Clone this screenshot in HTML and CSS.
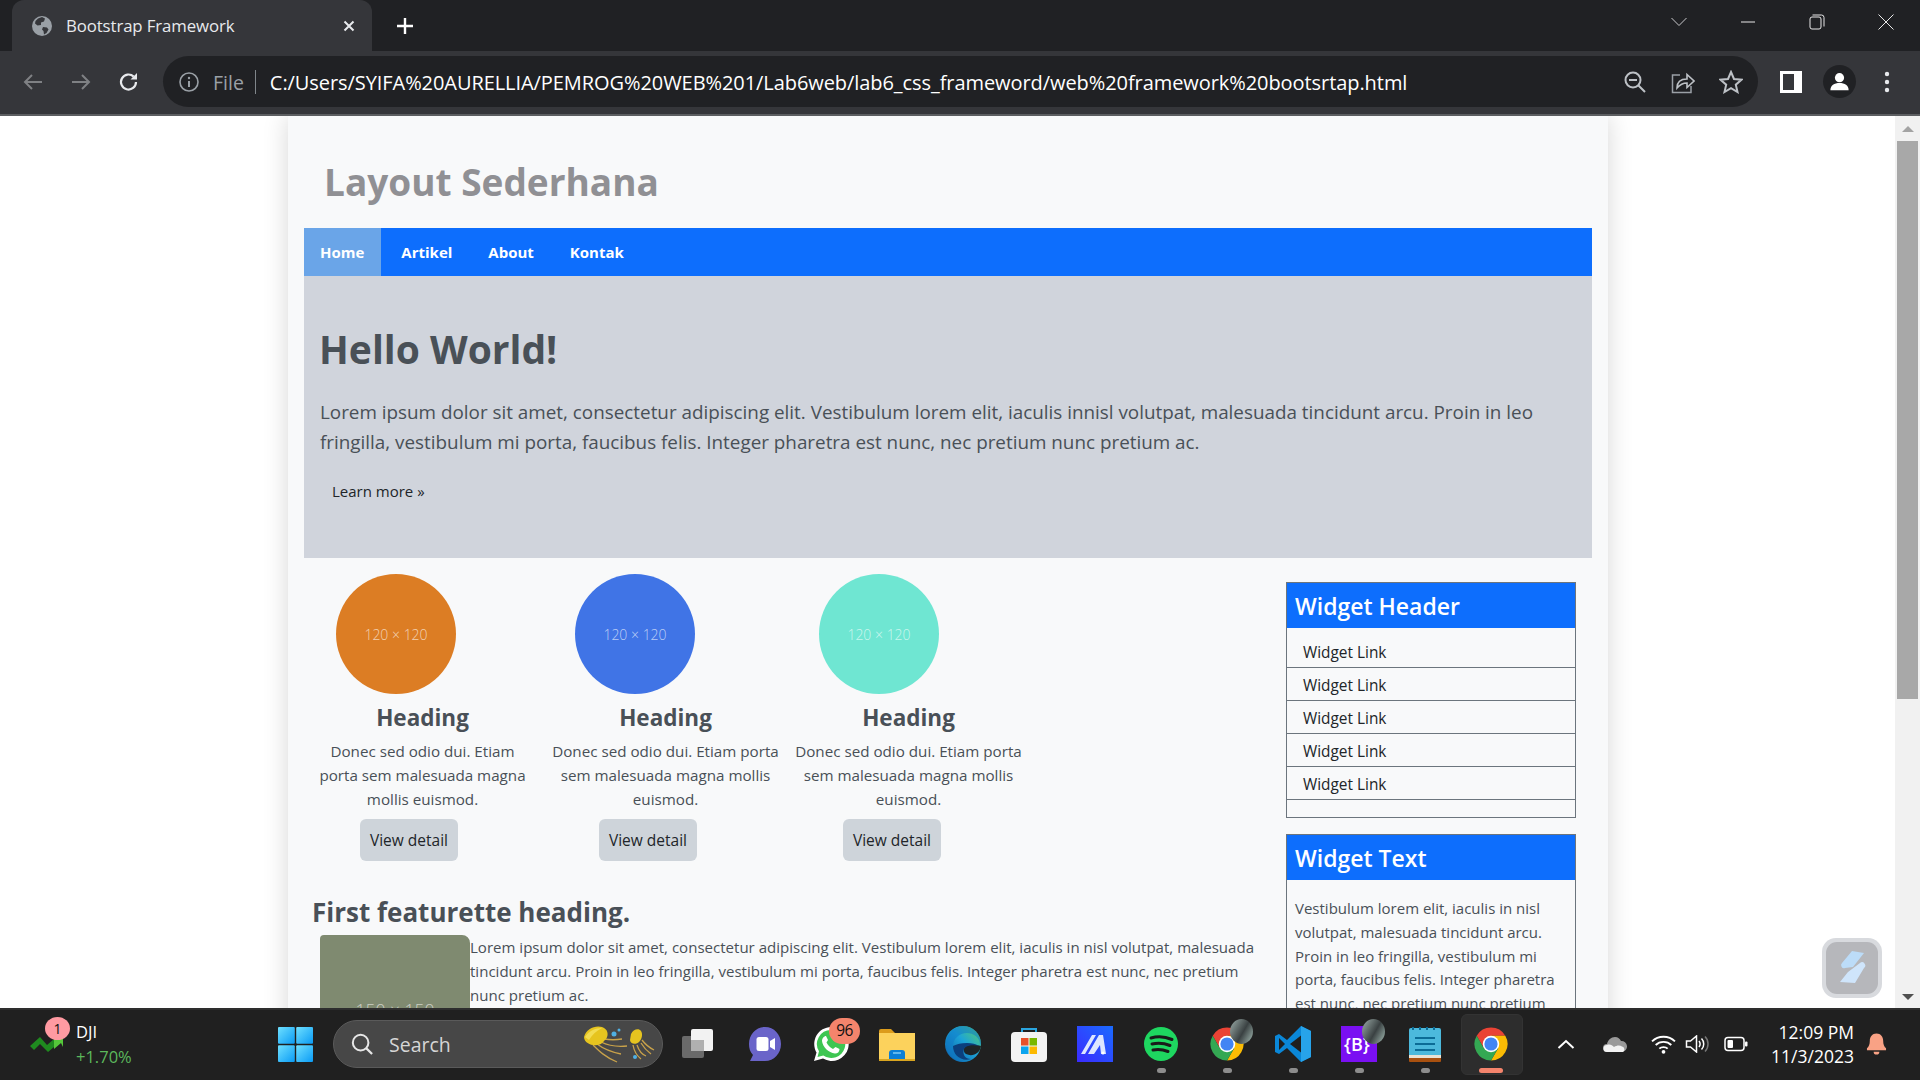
FILE: index.html
```html
<!DOCTYPE html>
<html lang="id">
<head>
<meta charset="utf-8">
<title>Bootstrap Framework</title>
<link rel="stylesheet" href="styles.css">
</head>
<body>
<svg class="defs" width="0" height="0">
  <symbol id="chrome" viewBox="0 0 24 24">
    <path fill="#ea4335" d="M2.47 6.5A11 11 0 0 1 21.53 6.5H12L7.24 14.75Z"/>
    <path fill="#fbbc04" d="M21.53 6.5A11 11 0 0 1 12 23L16.76 14.75 12 6.5Z"/>
    <path fill="#34a853" d="M12 23A11 11 0 0 1 2.47 6.5L7.24 14.75H16.76Z"/>
    <circle cx="12" cy="12" r="5.5" fill="#fff"/><circle cx="12" cy="12" r="4.4" fill="#4285f4"/>
  </symbol>
  <linearGradient id="winblue" x1="0" y1="0" x2="1" y2="1"><stop offset="0" stop-color="#6fe0ff"/><stop offset="1" stop-color="#0a9bf5"/></linearGradient>
  <linearGradient id="edgeg" x1="1" y1="0" x2="0" y2="1"><stop offset="0" stop-color="#5fd35f"/><stop offset=".45" stop-color="#1ca3d8"/><stop offset="1" stop-color="#0c59a4"/></linearGradient>
  <linearGradient id="magen" x1="0" y1="1" x2="1" y2="0"><stop offset="0" stop-color="#3b2bff"/><stop offset="1" stop-color="#1a6bff"/></linearGradient>
</svg>

<header class="tabstrip">
  <div class="tab">
    <svg class="favicon" viewBox="0 0 20 20"><circle cx="10" cy="10" r="10" fill="#9aa0a6"/><path fill="#35363a" d="M6 2.5 10 1l3 1.5-1 3-3 1v2.500L5.500 9.500 3 7.500 3.500 5ZM11 11l4 .5 1.500 2-2 3.500-2.500 1.500-.5-3.500-1.500-1.500Z"/></svg>
    <span class="tab-title">Bootstrap Framework</span>
    <svg class="tab-close" viewBox="0 0 12 12"><path d="M1.500 1.500l9 9M10.500 1.500l-9 9" stroke="#e8eaed" stroke-width="2" fill="none"/></svg>
  </div>
  <svg class="newtab" viewBox="0 0 18 18"><path d="M9 1v16M1 9h16" stroke="#fff" stroke-width="2.400" fill="none"/></svg>
  <div class="winctl">
    <svg class="winbtn" viewBox="0 0 16 10"><path d="M.5 1l7.500 7.500L15.500 1" stroke="#c8c9cb" fill="none"/></svg>
    <svg class="winbtn" viewBox="0 0 16 10"><path d="M1 5h14" stroke="#e8e8e8" fill="none"/></svg>
    <svg class="winbtn" viewBox="0 0 16 16"><path d="M3 1.500h9a2.500 2.500 0 0 1 2.500 2.500v9" stroke="#e8e8e8" fill="none" transform="translate(.5 -.5)"/><rect x="1" y="3" width="11" height="12" rx="2" stroke="#e8e8e8" fill="none"/></svg>
    <svg class="winbtn" viewBox="0 0 16 16"><path d="M.5.5l15 15M15.500.5l-15 15" stroke="#e8e8e8" fill="none"/></svg>
  </div>
</header>

<nav class="toolbar">
  <svg class="tool" viewBox="0 0 24 24"><path d="M21 12H4M11 5l-7 7 7 7" stroke="#7f8184" stroke-width="2" fill="none"/></svg>
  <svg class="tool" viewBox="0 0 24 24"><path d="M3 12h17M13 5l7 7-7 7" stroke="#7f8184" stroke-width="2" fill="none"/></svg>
  <svg class="tool" viewBox="0 0 24 24"><path d="M19 12a7.500 7.500 0 1 1-2.300-5.400" stroke="#e8eaed" stroke-width="2.200" fill="none"/><path d="M20 3v6.500h-6.500Z" fill="#e8eaed"/></svg>
  <div class="omnibox">
    <svg class="info" viewBox="0 0 20 20"><circle cx="10" cy="10" r="9" stroke="#9aa0a6" stroke-width="1.600" fill="none"/><path d="M10 9v6" stroke="#9aa0a6" stroke-width="2"/><circle cx="10" cy="6" r="1.200" fill="#9aa0a6"/></svg>
    <span class="scheme">File</span>
    <span class="omni-sep"></span>
    <span class="url">C:/Users/SYIFA%20AURELLIA/PEMROG%20WEB%201/Lab6web/lab6_css_frameword/web%20framework%20bootsrtap.html</span>
    <div class="omni-icons">
      <svg class="omni-ic" viewBox="0 0 24 24"><circle cx="10" cy="10" r="7.500" stroke="#bdc1c6" stroke-width="2" fill="none"/><path d="M6 10h8M15.500 15.500L22 22" stroke="#bdc1c6" stroke-width="2" fill="none"/></svg>
      <svg class="omni-ic" viewBox="0 0 24 24"><path d="M9 5H1.500v17.500H20V16" stroke="#9aa0a6" stroke-width="1.500" fill="none"/><path d="M6 18c0-6 4-9 10-9V4.500L23 11l-7 6.500V13c-4 0-7 1.500-10 5Z" stroke="#bdc1c6" stroke-width="1.600" fill="none"/></svg>
      <svg class="omni-ic" viewBox="0 0 24 24"><path d="M12 2l3 7 7.500.7-5.700 5 1.700 7.300L12 18.200 5.500 22l1.700-7.300-5.700-5L9 9Z" stroke="#bdc1c6" stroke-width="2" fill="none"/></svg>
    </div>
  </div>
  <div class="tool-end">
    <svg class="sidepanel" viewBox="0 0 22 22"><rect width="22" height="22" fill="#fff"/><rect x="3" y="3" width="11" height="16" fill="#35363a"/></svg>
    <div class="avatar"><svg viewBox="0 0 24 24"><circle cx="12" cy="8" r="4.800" fill="#fff"/><path d="M2.500 21c0-5 4-7.500 9.500-7.500s9.500 2.500 9.500 7.500Z" fill="#fff"/></svg></div>
    <svg class="kebab" viewBox="0 0 6 22"><circle cx="3" cy="3" r="2.200" fill="#e8eaed"/><circle cx="3" cy="11" r="2.200" fill="#e8eaed"/><circle cx="3" cy="19" r="2.200" fill="#e8eaed"/></svg>
  </div>
</nav>

<div class="viewport">
  <main class="page">
    <div class="container">
      <div class="site-head"><h1 class="site-title">Layout Sederhana</h1></div>
      <ul class="menu">
        <li class="menu-item is-active">Home</li>
        <li class="menu-item">Artikel</li>
        <li class="menu-item">About</li>
        <li class="menu-item">Kontak</li>
      </ul>
      <section class="hero">
        <h2 class="hero-title">Hello World!</h2>
        <p class="hero-lead">Lorem ipsum dolor sit amet, consectetur adipiscing elit. Vestibulum lorem elit, iaculis innisl volutpat, malesuada tincidunt arcu. Proin in leo<br>fringilla, vestibulum mi porta, faucibus felis. Integer pharetra est nunc, nec pretium nunc pretium ac.</p>
        <span class="hero-link">Learn more »</span>
      </section>
      <div class="content">
        <div class="primary">
          <div class="cols">
            <article class="col col-a">
              <div class="circle circle-orange">120 × 120</div>
              <h3 class="col-title">Heading</h3>
              <p class="col-text">Donec sed odio dui. Etiam<br>porta sem malesuada magna<br>mollis euismod.</p>
              <span class="btn">View detail</span>
            </article>
            <article class="col col-b">
              <div class="circle circle-blue">120 × 120</div>
              <h3 class="col-title">Heading</h3>
              <p class="col-text">Donec sed odio dui. Etiam porta<br>sem malesuada magna mollis<br>euismod.</p>
              <span class="btn">View detail</span>
            </article>
            <article class="col col-c">
              <div class="circle circle-teal">120 × 120</div>
              <h3 class="col-title">Heading</h3>
              <p class="col-text">Donec sed odio dui. Etiam porta<br>sem malesuada magna mollis<br>euismod.</p>
              <span class="btn">View detail</span>
            </article>
          </div>
          <h2 class="feat-title">First featurette heading.</h2>
          <div class="feat">
            <div class="feat-img">150 × 150</div>
            <p class="feat-text">Lorem ipsum dolor sit amet, consectetur adipiscing elit. Vestibulum lorem elit, iaculis in nisl volutpat, malesuada<br>tincidunt arcu. Proin in leo fringilla, vestibulum mi porta, faucibus felis. Integer pharetra est nunc, nec pretium<br>nunc pretium ac.</p>
          </div>
        </div>
        <aside class="sidebar">
          <div class="widget">
            <h3 class="widget-head">Widget Header</h3>
            <ul class="widget-list">
              <li class="widget-link">Widget Link</li>
              <li class="widget-link">Widget Link</li>
              <li class="widget-link">Widget Link</li>
              <li class="widget-link">Widget Link</li>
              <li class="widget-link">Widget Link</li>
            </ul>
          </div>
          <div class="widget">
            <h3 class="widget-head">Widget Text</h3>
            <p class="widget-text">Vestibulum lorem elit, iaculis in nisl<br>volutpat, malesuada tincidunt arcu.<br>Proin in leo fringilla, vestibulum mi<br>porta, faucibus felis. Integer pharetra<br>est nunc, nec pretium nunc pretium</p>
          </div>
        </aside>
      </div>
    </div>
    <div class="float-btn"><svg viewBox="0 0 60 60"><rect x="4" y="4" width="52" height="52" rx="11" fill="#b6b7bb"/><path d="M30 13l12 2-11 14-8 1a3 3 0 0 1-3-5Z" fill="#bcdcf8"/><path d="M38 25a3 3 0 0 1 4 5L33 45l-15-1 8-10Z" fill="#cfe5fb"/></svg></div>
  </main>
  <div class="scrollbar">
    <span class="sb-up"></span>
    <div class="sb-thumb"></div>
    <span class="sb-down"></span>
  </div>
</div>

<footer class="taskbar">
  <div class="tb-widget">
    <div class="stock-ic">
      <svg viewBox="0 0 34 18"><path d="M0 11L10 2l7 8 7-6v8l-6 5-8-8-6 6Z" fill="#1f8a1f"/><path d="M24 4l9-2v10l-2-4-7 6Z" fill="#55c83a"/></svg>
      <span class="stock-badge">1</span>
    </div>
    <div class="stock-text"><span class="stock-name">DJI</span><span class="stock-val">+1.70%</span></div>
  </div>
  <svg class="tb-start" viewBox="0 0 35 35"><rect width="16.800" height="16.800" rx="1" fill="url(#winblue)"/><rect x="18.200" width="16.800" height="16.800" rx="1" fill="url(#winblue)"/><rect y="18.200" width="16.800" height="16.800" rx="1" fill="url(#winblue)"/><rect x="18.200" y="18.200" width="16.800" height="16.800" rx="1" fill="url(#winblue)"/></svg>
  <div class="tb-search">
    <svg class="tb-search-ic" viewBox="0 0 24 24"><circle cx="10.500" cy="10.500" r="8.500" stroke="#e6e6e6" stroke-width="2.200" fill="none"/><path d="M16.500 16.500L23 23" stroke="#e6e6e6" stroke-width="2.400"/></svg>
    <span class="tb-search-text">Search</span>
    <svg class="tb-jelly" viewBox="0 0 72 38"><g stroke="#c9a24a" stroke-width="1.300" fill="none"><path d="M10 20c6 6 12 12 24 17M14 19c8 6 14 8 24 10M18 17c8 4 16 5 26 4M21 14c6 1 12 1 18 0"/><path d="M50 20c1 6 3 10 8 14M54 20c2 6 4 9 9 11M58 18c3 5 6 8 10 11M59 15c3 4 6 7 12 10"/></g><path d="M1 12C3 4 12 0 19 2c6 2 7 8 4 12-3 3-5 6-9 6-5 1-13-2-13-8Z" fill="#e6c41f"/><path d="M2 12c4-6 10-9 17-9-6 3-10 7-13 12Z" fill="#f2dc52"/><path d="M48 9c2-5 8-6 10-3 2 3 1 8-2 11-3 3-9 2-9-2Z" fill="#e6c41f"/><circle cx="31" cy="9" r="2.500" fill="#4fb0e4"/><circle cx="36" cy="5" r="1.500" fill="#4fb0e4"/><circle cx="52" cy="32" r="2" fill="#4fb0e4"/></svg>
  </div>
  <div class="tb-apps">
    <div class="tb-app"><svg class="tb-ic" viewBox="0 0 36 36"><rect x="1" y="10" width="22" height="22" rx="2" fill="#6a6a6a"/><rect x="10" y="3" width="22" height="22" rx="2" fill="#f2f2f2"/><rect x="10" y="14" width="13" height="11" fill="#b0b0b0"/></svg></div>
    <div class="tb-app"><svg class="tb-ic" viewBox="0 0 36 36"><path d="M18 1c9 0 16 7.500 16 17s-7 17-16 17H3l3-6C3 26 2 22 2 18 2 8.500 9 1 18 1Z" fill="#6a64c9"/><rect x="9.500" y="11" width="12" height="14" rx="2.500" fill="#fff"/><path d="M23 15l5-3v12l-5-3Z" fill="#fff"/></svg></div>
    <div class="tb-app">
      <svg class="tb-ic" viewBox="0 0 36 36"><path d="M18 1a17 17 0 0 0-14.500 25.500L1 35l9-2.400A17 17 0 1 0 18 1Z" fill="#fff"/><path d="M18 4a14 14 0 0 0-12 21.300L4.500 31l5.800-1.500A14 14 0 1 0 18 4Z" fill="#3ec652"/><path d="M13 10l2 4-1.500 2.500c1.500 3 3.500 5 6.500 6.500l2.500-2 4 2c0 3-2 4.500-4.500 4.500-6.500-.5-12.500-7-13-12.500C9 12.500 11 10 13 10Z" fill="#fff"/></svg>
      <span class="tb-badge">96</span>
    </div>
    <div class="tb-app"><svg class="tb-ic" viewBox="0 0 36 36"><path d="M0 5a2 2 0 0 1 2-2h10l4 4h-16Z" fill="#dc9c1c"/><path d="M0 7h36v27H0Z" fill="#fcd25c"/><path d="M0 33h36v2H0Z" fill="#d9a520"/><path d="M10 32V27a3 3 0 0 1 3-3h10a3 3 0 0 1 3 3v6H10Z" fill="#0b7fd6"/><path d="M14 27h8" stroke="#7ccaf5" stroke-width="1.500"/></svg></div>
    <div class="tb-app"><svg class="tb-ic" viewBox="0 0 36 36"><circle cx="18" cy="18" r="18" fill="url(#edgeg)"/><path d="M36 20c-1 8-9 11-15 8-3-2-3-6 0-8 4-3 11-1 15 0Z" fill="#1f1f1f" opacity=".95"/><path d="M35 19c0-8-7-12-13-12-8 0-14 6-14 13 0 8 6 15 14 16-12 0-21-7-21-18C1 8 9 0 18 0c10 0 18 8 18 18Z" fill="#0f7ac9" opacity=".55"/><path d="M8 20c0 9 8 16 18 13-6 0-9-5-7-10 1-3 8-5 15-3-3-2-7-3-12-3-6 0-10 1-14 3Z" fill="#0b3f7d"/></svg></div>
    <div class="tb-app"><svg class="tb-ic" viewBox="0 0 36 36"><path d="M11 8V3h14v5" stroke="#2aa5df" stroke-width="2" fill="none"/><rect y="6" width="36" height="30" rx="4" fill="#f3f3f3"/><rect x="10" y="12" width="7.500" height="7.500" fill="#e8502a"/><rect x="18.500" y="12" width="7.500" height="7.500" fill="#7ab800"/><rect x="10" y="20.500" width="7.500" height="7.500" fill="#0ca4ee"/><rect x="18.500" y="20.500" width="7.500" height="7.500" fill="#fcb900"/></svg></div>
    <div class="tb-app"><svg class="tb-ic" viewBox="0 0 36 36"><rect width="36" height="36" fill="url(#magen)"/><path d="M4 28L15 9h4L8 28ZM11 28L22 9h4l3 19h-5l-1-9-6 9Z" fill="#dde6ff"/><circle cx="26" cy="27" r="1.500" fill="#fff"/></svg></div>
    <div class="tb-app"><svg class="tb-ic" viewBox="0 0 36 36"><circle cx="18" cy="18" r="17" fill="#1ed760"/><path d="M8 12c7-2 14-1.500 21 1.500M9 18c6-1.500 12-1 18 1.500M10 24c5-1 10-.5 15 1.500" stroke="#1a1a1a" stroke-width="3" stroke-linecap="round" fill="none"/></svg><span class="tb-dot"></span></div>
    <div class="tb-app"><svg class="tb-ic" viewBox="0 0 24 24"><use href="#chrome"/></svg><span class="tb-over"></span><span class="tb-dot"></span></div>
    <div class="tb-app"><svg class="tb-ic" viewBox="0 0 36 36"><path d="M26 0l10 5v26l-10 5-14-14-8 6-4-2V10l4-2 8 6Z" fill="#0a87d8"/><path d="M26 0l10 5v26l-10 5Z" fill="#27a3ea"/><path d="M26 9.500L15 18l11 8.500Z" fill="#1f1f1f"/><path d="M4 12v12l6-6Z" fill="#1f1f1f"/></svg><span class="tb-dot"></span></div>
    <div class="tb-app"><svg class="tb-ic" viewBox="0 0 36 36"><rect width="36" height="36" fill="#7a10f2"/><text class="bs-mark" x="3" y="25">{B}</text></svg><span class="tb-over"></span><span class="tb-dot"></span></div>
    <div class="tb-app"><svg class="tb-ic" viewBox="0 0 36 36"><rect x="2" y="2" width="32" height="30" rx="2" fill="#4cb9dc"/><rect x="2" y="30" width="32" height="6" rx="1" fill="#a8500f"/><rect x="2" y="29" width="32" height="3" fill="#e9e2d4"/><path d="M8 12h20M8 18h20M8 24h20" stroke="#0b6c96" stroke-width="2"/><path d="M6 4v-3M13 4v-3M20 4v-3M27 4v-3" stroke="#0b6c96" stroke-width="2"/></svg><span class="tb-dot"></span></div>
    <div class="tb-app is-current"><svg class="tb-ic" viewBox="0 0 24 24"><use href="#chrome"/></svg><span class="tb-bar"></span></div>
  </div>
  <div class="tray">
    <svg class="tray-chev" viewBox="0 0 18 10"><path d="M1.500 9L9 2l7.500 7" stroke="#fff" stroke-width="2" fill="none"/></svg>
    <svg class="tray-cloud" viewBox="0 0 24 16"><path d="M4 16a4 4 0 0 1 0-8c1-4 4-7 8-7 3 0 5 2 6 4a5.500 5.500 0 0 1 1 11Z" fill="#9a9a9a"/><path d="M4 16a3.500 3.500 0 0 1 0-7c3-1 5 0 7 2 3-2 6-2 8-.500a3 3 0 0 1 1 5.500Z" fill="#f2f2f2"/></svg>
    <svg class="tray-wifi" viewBox="0 0 24 18"><path d="M1 6c6-6 16-6 22 0M4.500 9.500c4-4 11-4 15 0M8 13c2-2 6-2 8 0" stroke="#fff" stroke-width="1.800" fill="none"/><circle cx="12" cy="16" r="1.800" fill="#fff"/></svg>
    <svg class="tray-vol" viewBox="0 0 24 18"><path d="M1.500 6v6h4l6 5V1l-6 5Z" stroke="#fff" stroke-width="1.500" fill="none"/><path d="M14 6c1.500 2 1.500 4 0 6M16.500 3.500c3 3 3 8 0 11" stroke="#fff" stroke-width="1.500" fill="none"/><path d="M20 1.500c4 4 4 11 0 15" stroke="#777" stroke-width="1.500" fill="none"/></svg>
    <svg class="tray-batt" viewBox="0 0 24 16"><rect x="1" y="1.500" width="19" height="13" rx="3" stroke="#fff" stroke-width="1.500" fill="none"/><rect x="3.500" y="4" width="5.500" height="8" rx="1" fill="#fff"/><rect x="21" y="5.500" width="2.500" height="5" rx="1" fill="#fff"/></svg>
    <div class="clock"><span>12:09 PM</span><span>11/3/2023</span></div>
    <svg class="tray-bell" viewBox="0 0 22 24"><path d="M11 1c4.500 0 7 3.500 7 7.500 0 4 1 6 3 8v2H1v-2c2-2 3-4 3-8C4 4.500 6.500 1 11 1Z" fill="#f9a285"/><path d="M8 20h6a3 3 0 0 1-6 0Z" fill="#f9a285"/></svg>
  </div>
</footer>
</body>
</html>
```
FILE: styles.css
```css
* { box-sizing: border-box; }
html, body { margin: 0; padding: 0; height: 100%; overflow: hidden; }
body { display: flex; flex-direction: column; height: 1080px; font-family: "Open Sans", "Noto Sans", sans-serif; }
.defs { position: absolute; }
ul { list-style: none; margin: 0; padding: 0; }
h1, h2, h3, p { margin: 0; }

/* Browser chrome */
.tabstrip { height: 51px; background: #202124; display: flex; align-items: stretch; padding-left: 12px; flex: none; }
.tab { width: 360px; height: 51px; background: #35363a; border-radius: 12px 12px 0 0; display: flex; align-items: center; padding: 0 0 0 20px; }
.favicon { width: 20px; height: 20px; flex: none; }
.tab-title { font-size: 16.800px; color: #e8eaed; margin-left: 14px; flex: 1; white-space: nowrap; letter-spacing: -.1px; }
.tab-close { width: 12px; height: 12px; margin-right: 17px; }
.newtab { width: 18px; height: 18px; align-self: center; margin-left: 24px; }
.winctl { margin-left: auto; display: flex; align-items: center; height: 43px; padding-right: 26px; gap: 53px; }
.winbtn { width: 16px; height: 16px; }
.toolbar { height: 65px; background: #35363a; border-bottom: 2px solid #5c5e61; display: flex; align-items: center; padding: 0 0 2px 21px; flex: none; }
.tool { width: 24px; height: 24px; margin-right: 24px; flex: none; }
.tool:nth-child(3) { margin-right: 22px; }
.omnibox { width: 1595px; height: 51px; border-radius: 26px; background: #202124; display: flex; align-items: center; padding: 0 15px 0 16px; flex: none; }
.info { width: 20px; height: 20px; flex: none; }
.scheme { font-size: 19.500px; color: #9aa0a6; margin: 2px 0 0 14px; }
.omni-sep { width: 1px; height: 24px; background: #80868b; margin: 0 14px 0 11px; }
.url { font-size: 20px; color: #fff; white-space: nowrap; letter-spacing: -.07px; margin-top: 2px; }
.omni-icons { margin-left: auto; display: flex; align-items: center; gap: 24px; }
.omni-ic { width: 24px; height: 24px; }
.tool-end { display: flex; align-items: center; margin-left: 22px; }
.sidepanel { width: 22px; height: 22px; }
.avatar { width: 33px; height: 33px; border-radius: 50%; background: #202124; margin-left: 21px; padding: 5px; display: flex; }
.kebab { width: 6px; height: 22px; margin-left: 28px; }

/* Page viewport */
.viewport { height: 892px; display: flex; flex: none; overflow: hidden; }
.page { flex: 1; background: #fff; position: relative; overflow: hidden; padding-left: 288px; }
.container { width: 1320px; background: #f8f9fa; box-shadow: 0 0 24px rgba(0, 0, 0, .16); padding: 0 16px; height: 1400px; color: #495057; }
.site-head { padding: 42px 0 22px 20px; }
.site-title { font-size: 37px; line-height: 48px; font-weight: 700; color: #909094; white-space: nowrap; }
.menu { display: flex; gap: 4px; height: 48px; background: #0d6efd; }
.menu-item { color: #fff; font-size: 15px; font-weight: 700; line-height: 48px; padding: 0 16px; }
.menu-item.is-active { background: #6aa5e8; padding-right: 17px; }
.hero { height: 282px; background: #d0d4dc; padding: 49px 16px 0; }
.hero-title { font-size: 39px; line-height: 48px; font-weight: 700; color: #495057; margin-left: -1px; }
.hero-lead { font-size: 18.850px; line-height: 30px; margin-top: 24px; white-space: nowrap; }
.hero-link { display: block; font-size: 15px; line-height: 24px; color: #212529; margin: 22px 0 0 12px; }
.content { display: flex; }
.primary { flex: 1; min-width: 0; padding-top: 16px; }
.cols { display: grid; grid-template-columns: repeat(3, 243px); margin-left: -3px; }
.col { display: flex; flex-direction: column; align-items: flex-start; }
.circle { width: 120px; height: 120px; border-radius: 50%; color: rgba(255, 255, 255, .65); font-size: 14px; font-weight: 300; display: flex; align-items: center; justify-content: center; }
.circle-orange { background: #dc7d24; }
.circle-blue { background: #4074e6; }
.circle-teal { background: #6fe6d2; }
.col-title { width: 100%; text-align: center; font-size: 22.500px; font-weight: 700; line-height: 32px; margin-top: 8px; }
.col-text { width: 100%; text-align: center; font-size: 15.200px; line-height: 24px; margin-top: 5px; white-space: nowrap; }
.btn { display: block; width: 98px; height: 42px; border-radius: 6px; background: #ced4da; color: #212529; font-size: 15.500px; font-weight: 500; line-height: 42px; text-align: center; margin-top: 8px; }
.col-a .circle { margin-left: 35px; }
.col-a .btn { margin-left: 59px; }
.col-b .circle { margin-left: 31px; }
.col-b .btn { margin-left: 55px; }
.col-c .circle { margin-left: 32px; }
.col-c .btn { margin-left: 56px; }
.feat-title { font-size: 26px; font-weight: 700; line-height: 34px; margin: 34px 0 6px 8px; white-space: nowrap; }
.feat { display: flex; padding-left: 16px; }
.feat-img { width: 150px; height: 150px; background: #7f8a70; border-radius: 4px 8px 0 0; color: rgba(255, 255, 255, .6); font-size: 17.500px; font-weight: 300; display: flex; align-items: center; justify-content: center; flex: none; }
.feat-text { font-size: 15.050px; line-height: 24px; white-space: nowrap; }
.sidebar { width: 290px; margin-right: 16px; padding-top: 24px; display: flex; flex-direction: column; gap: 16px; flex: none; }
.widget { border: 1px solid #6c757d; }
.widget-head { height: 45px; background: #0d6efd; color: #fff; font-size: 23px; font-weight: 600; line-height: 47px; padding-left: 8px; }
.widget-list { padding: 7px 0 17px; }
.widget-link { height: 33px; border-bottom: 1px solid #6c757d; padding-left: 16px; font-size: 15.400px; line-height: 36px; color: #212529; }
.widget-text { padding: 17px 8px; font-size: 15px; line-height: 23.750px; white-space: nowrap; }
.float-btn { position: absolute; left: 1822px; top: 822px; width: 60px; height: 60px; border-radius: 14px; background: #d8dade; display: flex; }

/* Scrollbar */
.scrollbar { width: 25px; background: #f1f1f1; position: relative; flex: none; }
.sb-thumb { position: absolute; top: 25px; left: 2px; width: 21px; height: 558px; background: #a8a8a8; }
.sb-up { position: absolute; top: 10px; left: 7px; border: 6px solid transparent; border-top: 0; border-bottom: 6px solid #a3a3a3; }
.sb-down { position: absolute; bottom: 8px; left: 7px; border: 6px solid transparent; border-bottom: 0; border-top: 6px solid #505050; }

/* Taskbar */
.taskbar { height: 72px; background: #202020; border-top: 2px solid #2e2e2e; display: flex; align-items: center; flex: none; color: #fff; padding-bottom: 2px; }
.tb-widget { width: 278px; display: flex; align-items: center; padding-left: 30px; flex: none; }
.stock-ic { width: 34px; height: 18px; position: relative; display: flex; }
.stock-badge { position: absolute; left: 15px; top: -18px; width: 25px; height: 23px; border-radius: 50%; background: #ff9aa2; color: #111; font-size: 14px; text-align: center; line-height: 23px; }
.stock-text { display: flex; flex-direction: column; margin-left: 12px; font-size: 16.500px; line-height: 25px; }
.stock-val { color: #5cb85c; }
.tb-start { width: 35px; height: 35px; flex: none; }
.tb-search { width: 330px; height: 48px; border-radius: 24px; background: #474747; border: 1px solid #5a5a5a; margin-left: 20px; display: flex; align-items: center; padding-left: 17px; flex: none; }
.tb-search-ic { width: 22px; height: 22px; }
.tb-search-text { font-size: 19.500px; color: #d6d6d6; margin-left: 16px; }
.tb-jelly { width: 72px; height: 38px; margin-left: auto; margin-right: 7px; }
.tb-apps { display: flex; margin-left: 3px; flex: none; }
.tb-app { width: 66px; height: 60px; display: flex; justify-content: center; align-items: center; position: relative; }
.tb-ic { width: 36px; height: 36px; }
.tb-badge { position: absolute; left: 31px; top: 4px; width: 31px; height: 26px; border-radius: 13px; background: #f4846c; color: #111; font-size: 15.500px; line-height: 25px; text-align: center; letter-spacing: -.5px; }
.tb-over { position: absolute; left: 36px; top: 5px; width: 23px; height: 25px; border-radius: 50%; background: linear-gradient(120deg, #9fb0ac, #3a4142 55%, #a8c0b8); }
.tb-dot { position: absolute; left: 29px; bottom: 1px; width: 9px; height: 5px; border-radius: 3px; background: #8d8d8d; }
.is-current::before { content: ""; position: absolute; left: 3px; top: 0; width: 60px; height: 59px; border-radius: 6px; background: #2d2d2d; border: 1px solid #333; }
.is-current .tb-ic { position: relative; }
.tb-bar { position: absolute; left: 21px; bottom: 1px; width: 24px; height: 5px; border-radius: 3px; background: #f4846c; }
.bs-mark { fill: #fff; font-family: "Open Sans", sans-serif; font-size: 18px; font-weight: 600; }
.tray { flex: 1; display: flex; align-items: center; min-width: 0; }
.tray-chev { width: 18px; height: 10px; margin-left: 33px; }
.tray-cloud { width: 24px; height: 16px; margin-left: 28px; }
.tray-wifi { width: 25px; height: 19px; margin-left: 24px; }
.tray-vol { width: 24px; height: 18px; margin-left: 9px; }
.tray-batt { width: 24px; height: 16px; margin-left: 15px; }
.clock { display: flex; flex-direction: column; align-items: flex-end; width: 96px; margin-left: 10px; font-size: 17.500px; line-height: 24px; }
.tray-bell { width: 21px; height: 24px; margin-left: 12px; }
```
